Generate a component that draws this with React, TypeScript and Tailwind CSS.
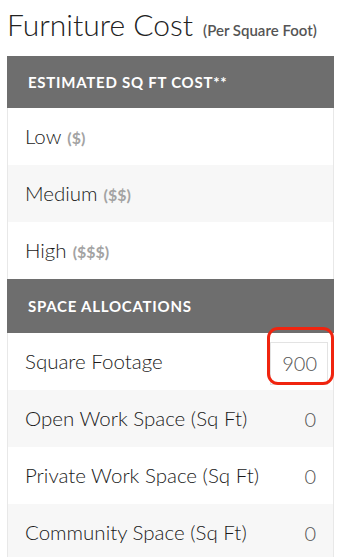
import React from 'react';

interface Row {
  label: string;
  hint?: string;
  value?: string;
  input?: boolean;
}

const costRows: Row[] = [
  { label: 'Low', hint: '($)' },
  { label: 'Medium', hint: '($$)' },
  { label: 'High', hint: '($$$)' },
];

const spaceRows: Row[] = [
  { label: 'Square Footage', value: '900', input: true },
  { label: 'Open Work Space (Sq Ft)', value: '0' },
  { label: 'Private Work Space (Sq Ft)', value: '0' },
  { label: 'Community Space (Sq Ft)', value: '0' },
];

const SectionHeader: React.FC<{ title: string; tall?: boolean }> = ({ title, tall }) => (
  <div
    className={`flex items-center bg-[#6e6e6e] pl-[21px] ${tall ? 'h-[54px]' : 'h-[52px]'}`}
  >
    <span className="text-[15px] font-bold tracking-[0.05em] text-white">{title}</span>
  </div>
);

const TableRow: React.FC<{ row: Row; index: number }> = ({ row, index }) => (
  <div
    className={`relative flex h-[57px] items-center justify-between border-x border-[#e8e8e8] pl-[17px] ${
      row.input ? 'pr-[5px]' : 'pr-[17px]'
    } ${index % 2 === 1 ? 'bg-[#f7f7f7]' : 'bg-white'}`}
  >
    <span className="text-[20.5px] font-light text-[#1a1a1a]">
      {row.label}
      {row.hint && (
        <span className="ml-[6px] text-[16px] font-bold text-[#a3a3a3]">{row.hint}</span>
      )}
    </span>
    {row.input ? (
      <>
        <input
          readOnly
          value={row.value}
          className="mt-[3px] h-[43px] w-[58px] border border-[#e3e3e3] bg-white pr-[10px] text-right text-[20px] font-light text-[#555] outline-none"
        />
        {/* annotation */}
        <div className="pointer-events-none absolute left-[259px] top-[-6px] h-[58px] w-[67px] rounded-[11px] border-[3px] border-[#f0240f]" />
      </>
    ) : (
      row.value && <span className="text-[20px] font-light text-[#555]">{row.value}</span>
    )}
  </div>
);

export default function App() {
  return (
    <div
      className="h-[557px] w-[341px] overflow-hidden bg-white"
      style={{ fontFamily: 'Lato, "Open Sans", sans-serif' }}
    >
      <div className="flex h-[56px] items-baseline pl-[7px] pt-[6px]">
        <h1 className="text-[30px] font-light leading-[36px] text-[#222]">Furniture Cost</h1>
        <span className="ml-[10px] text-[15px] font-semibold text-[#555]">(Per Square Foot)</span>
      </div>

      <div className="mx-[7px]">
        <SectionHeader title="ESTIMATED SQ FT COST**" />
        {costRows.map((row, i) => (
          <TableRow key={row.label} row={row} index={i} />
        ))}
        <SectionHeader title="SPACE ALLOCATIONS" tall />
        {spaceRows.map((row, i) => (
          <TableRow key={row.label} row={row} index={i} />
        ))}
      </div>
    </div>
  );
}
